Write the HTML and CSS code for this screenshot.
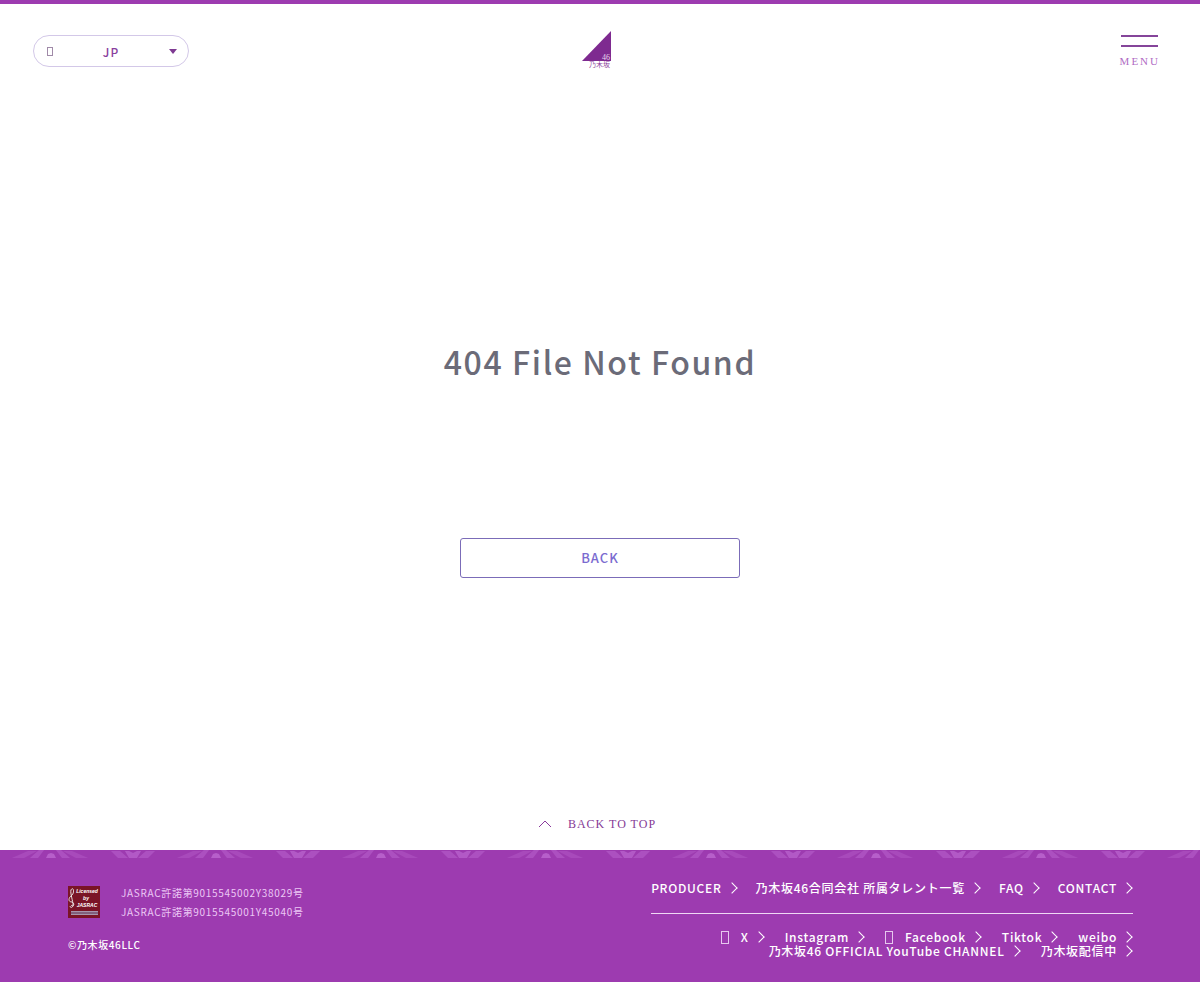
FILE: index.html
```html
<!DOCTYPE html>
<html lang="ja">
<head>
  <meta charset="utf-8">
  <meta name="viewport" content="width=device-width, initial-scale=1">
  <title>404 File Not Found</title>
  <link rel="stylesheet" href="styles.css">
</head>
<body>
  <header class="header">
    <label class="lang">
      <span class="lang-icon"></span>
      <select class="lang-select" aria-label="Language">
        <option>JP</option>
        <option>EN</option>
      </select>
    </label>
    <a class="logo" href="#" aria-label="乃木坂46">
      <svg width="36" height="40" viewBox="0 0 36 40">
        <path d="M32 0V30H3Z" fill="#7e2a90"/>
        <text class="logo-num" x="23" y="29">46</text>
        <text class="logo-name" x="10" y="36">乃木坂</text>
      </svg>
    </a>
    <button class="menu" type="button">
      <span class="menu-line"></span>
      <span class="menu-line"></span>
      <span class="menu-text">MENU</span>
    </button>
  </header>

  <main class="main">
    <h1 class="title">404 File Not Found</h1>
    <a class="back" href="#">BACK</a>
  </main>

  <a class="pagetop" href="#">
    <svg width="14" height="8" viewBox="0 0 14 8"><path d="M1 7L7 1L13 7" fill="none" stroke="#8a3a9c"/></svg>
    <span>BACK TO TOP</span>
  </a>

  <footer class="footer">
    <svg class="footer-pattern" width="100%" height="8">
      <defs>
        <pattern id="lace" x="-32" y="0" width="165" height="8" patternUnits="userSpaceOnUse">
          <g fill="#c877dc">
            <path d="M44 8L60 1H69L56 8Z" opacity=".25"/>
            <path d="M120 8L104 1H95L108 8Z" opacity=".25"/>
            <path d="M62 8L71 0H76L70 8Z" opacity=".35"/>
            <path d="M102 8L93 0H88L94 8Z" opacity=".35"/>
            <path d="M78 8L80 4L83 3L86 4L88 8Z" opacity=".6"/>
            <path d="M143 1H152L160 8H150Z" opacity=".35"/>
            <path d="M22 1H13L5 8H15Z" opacity=".35"/>
            <path d="M157 1H161L165 3V8H161Z" opacity=".5"/>
            <path d="M8 1H4L0 3V8H4Z" opacity=".5"/>
          </g>
        </pattern>
      </defs>
      <rect width="100%" height="8" fill="url(#lace)"/>
    </svg>
    <div class="footer-inner">
      <div class="footer-left">
        <div class="jasrac">
          <svg width="32" height="32" viewBox="0 0 32 32">
            <rect width="32" height="32" fill="#7a1426"/>
            <path d="M3 19C6 22 7 17 4 16C0 16 0 12 4 9C7 6 5 0 3 4C2 7 5 15 5 19C5 22 2 22 2 20" fill="none" stroke="#e8e0e0"/>
            <g class="jasrac-text">
              <text x="19" y="7">Licensed</text>
              <text x="18" y="14">by</text>
              <text x="19" y="21">JASRAC</text>
            </g>
            <path d="M3 25H30V29H3Z" fill="#a795ad"/>
            <path d="M3 27H30" stroke="#5d2a4c"/>
          </svg>
          <p class="jasrac-no">JASRAC許諾第9015545002Y38029号<br>JASRAC許諾第9015545001Y45040号</p>
        </div>
        <small class="copyright">©乃木坂46LLC</small>
      </div>
      <nav class="footer-nav">
        <ul class="links links-main">
          <li><a href="#">PRODUCER</a></li>
          <li><a href="#">乃木坂46合同会社 所属タレント一覧</a></li>
          <li><a href="#">FAQ</a></li>
          <li><a href="#">CONTACT</a></li>
        </ul>
        <ul class="links links-sns">
          <li><a href="#"><span class="sns-icon"></span>X</a></li>
          <li><a href="#">Instagram</a></li>
          <li><a href="#"><span class="sns-icon"></span>Facebook</a></li>
          <li><a href="#">Tiktok</a></li>
          <li><a href="#">weibo</a></li>
          <li><a href="#">乃木坂46 OFFICIAL YouTube CHANNEL</a></li>
          <li><a href="#">乃木坂配信中</a></li>
        </ul>
      </nav>
    </div>
  </footer>
</body>
</html>
```
FILE: styles.css
```css
* {
  box-sizing: border-box;
}

body {
  margin: 0;
  border-top: 4px solid #9d3bb0;
  background-color: #fff;
  color: #6b6b78;
  font-family: "Noto Sans CJK JP", sans-serif;
  font-weight: 500;
}

a {
  color: inherit;
  text-decoration: none;
}

ul {
  list-style: none;
  margin: 0;
  padding: 0;
}

.header {
  display: grid;
  grid-template-columns: 1fr auto 1fr;
  align-items: center;
  padding: 27px 40px 0 33px;
}

.lang {
  display: flex;
  align-items: center;
  width: 156px;
  height: 32px;
  padding: 0 11px 0 13px;
  border: 1px solid #d3c8e8;
  border-radius: 16px;
}

.lang::after {
  content: "";
  border: 4px solid transparent;
  border-top: 5px solid #7e3a92;
  border-bottom: 0;
}

.lang-icon {
  width: 6px;
  height: 9px;
  border: 1px solid #a08aa8;
}

.lang-select {
  flex: 1;
  appearance: none;
  border: 0;
  background: none;
  color: #8a3f9e;
  font: inherit;
  font-size: 12px;
  letter-spacing: 1px;
  text-align: center;
  text-align-last: center;
}

.logo svg {
  display: block;
}

.logo-num {
  fill: #e9d5ee;
  font-family: "Liberation Serif", serif;
  font-size: 8px;
}

.logo-name {
  fill: #8f48a0;
  font-size: 7px;
  font-weight: 400;
}

.menu {
  justify-self: end;
  display: flex;
  flex-direction: column;
  align-items: center;
  gap: 8px;
  padding: 0;
  border: 0;
  background: none;
}

.menu-line {
  width: 37px;
  height: 2px;
  background-color: #85459a;
}

.menu-text {
  color: #b06cc4;
  font-family: "Liberation Serif", serif;
  font-size: 11px;
  line-height: 12px;
  letter-spacing: 2px;
}

.main {
  display: flex;
  flex-direction: column;
  align-items: center;
  padding: 265px 20px 0;
}

.title {
  margin: 0 0 152px;
  font-size: 32px;
  font-weight: 500;
  line-height: 50px;
  letter-spacing: 0.05em;
}

.back {
  width: 280px;
  max-width: 100%;
  border: 1px solid #7b6cb8;
  border-radius: 3px;
  color: #7b6bd0;
  font-size: 13px;
  line-height: 38px;
  letter-spacing: 1px;
  text-align: center;
}

.pagetop {
  display: flex;
  justify-content: center;
  align-items: center;
  gap: 16px;
  padding: 236px 6px 16px 0;
  color: #843a96;
  font-family: "Liberation Serif", serif;
  font-size: 12px;
  font-weight: 400;
  line-height: 20px;
  letter-spacing: 1px;
}

.footer {
  background-color: #9d3bb0;
  color: #fff;
}

.footer-pattern {
  display: block;
}

.footer-inner {
  display: flex;
  justify-content: space-between;
  padding: 22px 67px 24px 68px;
}

.jasrac {
  display: flex;
  align-items: center;
  gap: 21px;
  margin-top: 3px;
}

.jasrac-text {
  fill: #fff;
  font-family: "Liberation Sans", sans-serif;
  font-size: 5px;
  font-style: italic;
  font-weight: bold;
  text-anchor: middle;
}

.jasrac-no {
  margin: 0;
  color: #ecc8f5;
  font-size: 10px;
  font-weight: 400;
  line-height: 19px;
  letter-spacing: 0.07em;
}

.copyright {
  display: block;
  margin-top: 14px;
  font-size: 10px;
  line-height: 20px;
  letter-spacing: 0.06em;
}

/* as wide as the first row of links */
.footer-nav {
  width: min-content;
}

.links {
  display: flex;
  justify-content: flex-end;
  font-size: 12px;
  line-height: 14px;
  letter-spacing: 0.06em;
  white-space: nowrap;
}

.links a {
  display: flex;
  align-items: center;
}

.links a::after {
  content: "";
  width: 7px;
  height: 7px;
  margin: 0 2px 0 6px;
  border-top: 1px solid #fff;
  border-right: 1px solid #fff;
  transform: rotate(45deg);
}

.links-main {
  column-gap: 18px;
  padding: 1px 0 18px;
  border-bottom: 1px solid #f0d8f5;
}

.links-sns {
  flex-wrap: wrap;
  column-gap: 20px;
  padding-top: 16px;
}

.sns-icon {
  width: 8px;
  height: 13px;
  margin-right: 12px;
  border: 1px solid #e6c8ee;
}
```
